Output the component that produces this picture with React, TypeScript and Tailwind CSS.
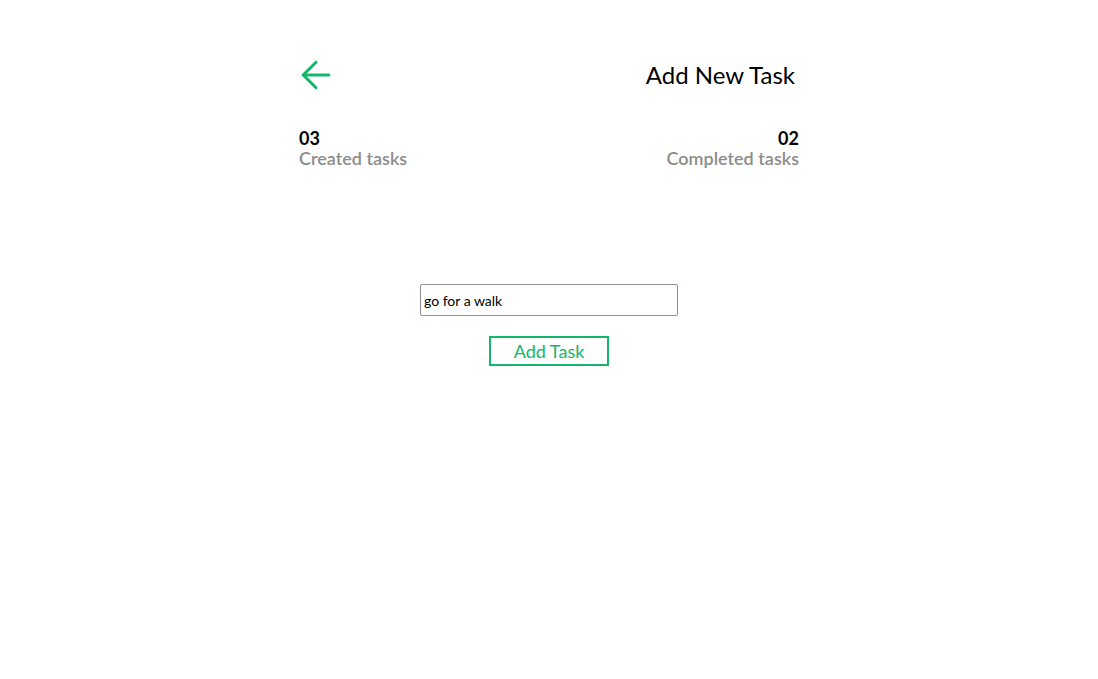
import { ArrowLeft } from 'lucide-react'

export default function App() {
  return (
    <div className="min-h-screen bg-white text-black" style={{ fontFamily: 'Lato, "Noto Sans", sans-serif' }}>
      <div className="mx-auto w-[500px] pt-[53px]">
        {/* Header */}
        <div className="flex items-center justify-between h-[44px]">
          <button className="text-[#12b76a] -ml-[5px]">
            <ArrowLeft size={44} strokeWidth={1.6} />
          </button>
          <h1 className="text-[24px] mr-[4px]">Add New Task</h1>
        </div>

        {/* Stats */}
        <div className="flex justify-between mt-[31px]">
          <div className="flex flex-col">
            <span className="text-[18px] font-bold leading-[20px]">03</span>
            <span className="text-[18px] font-semibold leading-[20px] text-[#8c8c8c]">Created tasks</span>
          </div>
          <div className="flex flex-col items-end">
            <span className="text-[18px] font-bold leading-[20px]">02</span>
            <span className="text-[18px] font-semibold leading-[20px] text-[#8c8c8c]">Completed tasks</span>
          </div>
        </div>

        {/* Form */}
        <div className="flex flex-col items-center mt-[116px]">
          <input
            defaultValue="go for a walk"
            className="w-[258px] h-[32px] px-[3px] text-[14px] border border-[#8f8f9d] rounded-[2px] outline-none"
          />
          <button className="mt-[20px] w-[120px] h-[30px] border-2 border-[#12b76a] text-[#12b76a] text-[18px] font-normal">
            Add Task
          </button>
        </div>
      </div>
    </div>
  )
}
